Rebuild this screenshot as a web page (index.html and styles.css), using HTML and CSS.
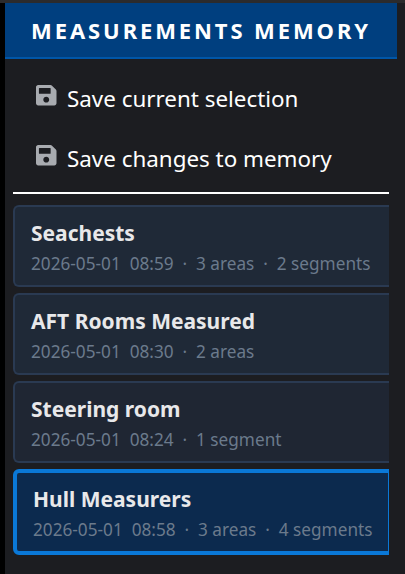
FILE: index.html
```html
<!DOCTYPE html>
<html lang="en">
<head>
  <meta charset="UTF-8">
  <meta name="viewport" content="width=device-width, initial-scale=1.0">
  <title>Measurements Memory</title>
  <link rel="stylesheet" href="styles.css">
</head>
<body>
  <div class="topbar"></div>
  <div class="panel">
    <div class="panel-header">MEASUREMENTS MEMORY</div>
    <div class="actions">
      <div class="action">
        <svg class="save-icon" viewBox="0 32 448 448"><path d="M433.941 129.941l-83.882-83.882A48 48 0 0 0 316.118 32H48C21.49 32 0 53.49 0 80v352c0 26.51 21.49 48 48 48h352c26.51 0 48-21.49 48-48V163.882a48 48 0 0 0-14.059-33.941zM224 416c-35.346 0-64-28.654-64-64 0-35.346 28.654-64 64-64s64 28.654 64 64c0 35.346-28.654 64-64 64zm96-304.52V212c0 6.627-5.373 12-12 12H76c-6.627 0-12-5.373-12-12V108c0-6.627 5.373-12 12-12h228.52c3.183 0 6.235 1.264 8.485 3.515l3.48 3.48A11.996 11.996 0 0 1 320 111.48z"/></svg>
        <span>Save current selection</span>
      </div>
      <div class="action">
        <svg class="save-icon" viewBox="0 32 448 448"><path d="M433.941 129.941l-83.882-83.882A48 48 0 0 0 316.118 32H48C21.49 32 0 53.49 0 80v352c0 26.51 21.49 48 48 48h352c26.51 0 48-21.49 48-48V163.882a48 48 0 0 0-14.059-33.941zM224 416c-35.346 0-64-28.654-64-64 0-35.346 28.654-64 64-64s64 28.654 64 64c0 35.346-28.654 64-64 64zm96-304.52V212c0 6.627-5.373 12-12 12H76c-6.627 0-12-5.373-12-12V108c0-6.627 5.373-12 12-12h228.52c3.183 0 6.235 1.264 8.485 3.515l3.48 3.48A11.996 11.996 0 0 1 320 111.48z"/></svg>
        <span>Save changes to memory</span>
      </div>
    </div>
    <hr class="divider">
    <div class="memory-list">
      <div class="memory-item">
        <div class="memory-name">Seachests</div>
        <div class="memory-meta">2026-05-01&nbsp; 08:59 &nbsp;·&nbsp; 3 areas &nbsp;·&nbsp; 2 segments</div>
      </div>
      <div class="memory-item">
        <div class="memory-name">AFT Rooms Measured</div>
        <div class="memory-meta">2026-05-01&nbsp; 08:30 &nbsp;·&nbsp; 2 areas</div>
      </div>
      <div class="memory-item steering">
        <div class="memory-name">Steering room</div>
        <div class="memory-meta">2026-05-01&nbsp; 08:24 &nbsp;·&nbsp; 1 segment</div>
      </div>
      <div class="memory-item active">
        <div class="memory-name">Hull Measurers</div>
        <div class="memory-meta">2026-05-01&nbsp; 08:58 &nbsp;·&nbsp; 3 areas &nbsp;·&nbsp; 4 segments</div>
      </div>
    </div>
  </div>
</body>
</html>
```

FILE: styles.css
```css
* {
  margin: 0;
  padding: 0;
  box-sizing: border-box;
}
html, body {
  height: 100%;
}
body {
  font-family: "Noto Sans", "Open Sans", sans-serif;
  background-color: #000;
  display: flex;
  flex-direction: column;
  overflow: hidden;
}
.topbar {
  height: 3px;
  background: #2b2b2d;
}
.panel {
  flex: 1;
  margin-left: 5px;
  background: #1c1d21;
  color: #fff;
  padding-right: 8px;
}
.panel-header {
  height: 56px;
  background: #003f7f;
  border-bottom: 2px solid #0056a8;
  color: #fff;
  font-size: 22px;
  font-weight: 700;
  letter-spacing: 2.9px;
  line-height: 54px;
  text-align: center;
}
.actions {
  padding: 9px 8px 0 31px;
}
.action {
  display: flex;
  align-items: center;
  gap: 10.5px;
  height: 60px;
  font-size: 22.4px;
}
.save-icon {
  width: 20.5px;
  height: 20.5px;
  fill: #a8abb0;
  margin-bottom: 5px;
}
.divider {
  border: none;
  border-top: 2px solid #fff;
  margin: 4px 8px 0;
}
.memory-list {
  display: flex;
  flex-direction: column;
  gap: 6px;
  margin: 11px 8px 0;
}
.memory-item {
  height: 82px;
  padding: 12px 16px;
  background: #1f2937;
  border: 2px solid #2a3a52;
  border-right: none;
  border-radius: 6px 0 0 6px;
}
.memory-item.steering {
  background: #1f2633;
}
.memory-item.active {
  height: 86px;
  background: #0c2a4e;
  border: 4px solid #0a78d7;
  border-right: 1px solid #0a78d7;
}
.memory-name {
  font-size: 21px;
  font-weight: 700;
  color: #e8e8ea;
  line-height: 28px;
}
.memory-meta {
  font-size: 17.2px;
  color: #6b7a8c;
  line-height: 22px;
  margin-top: 6px;
  white-space: nowrap;
}
```
